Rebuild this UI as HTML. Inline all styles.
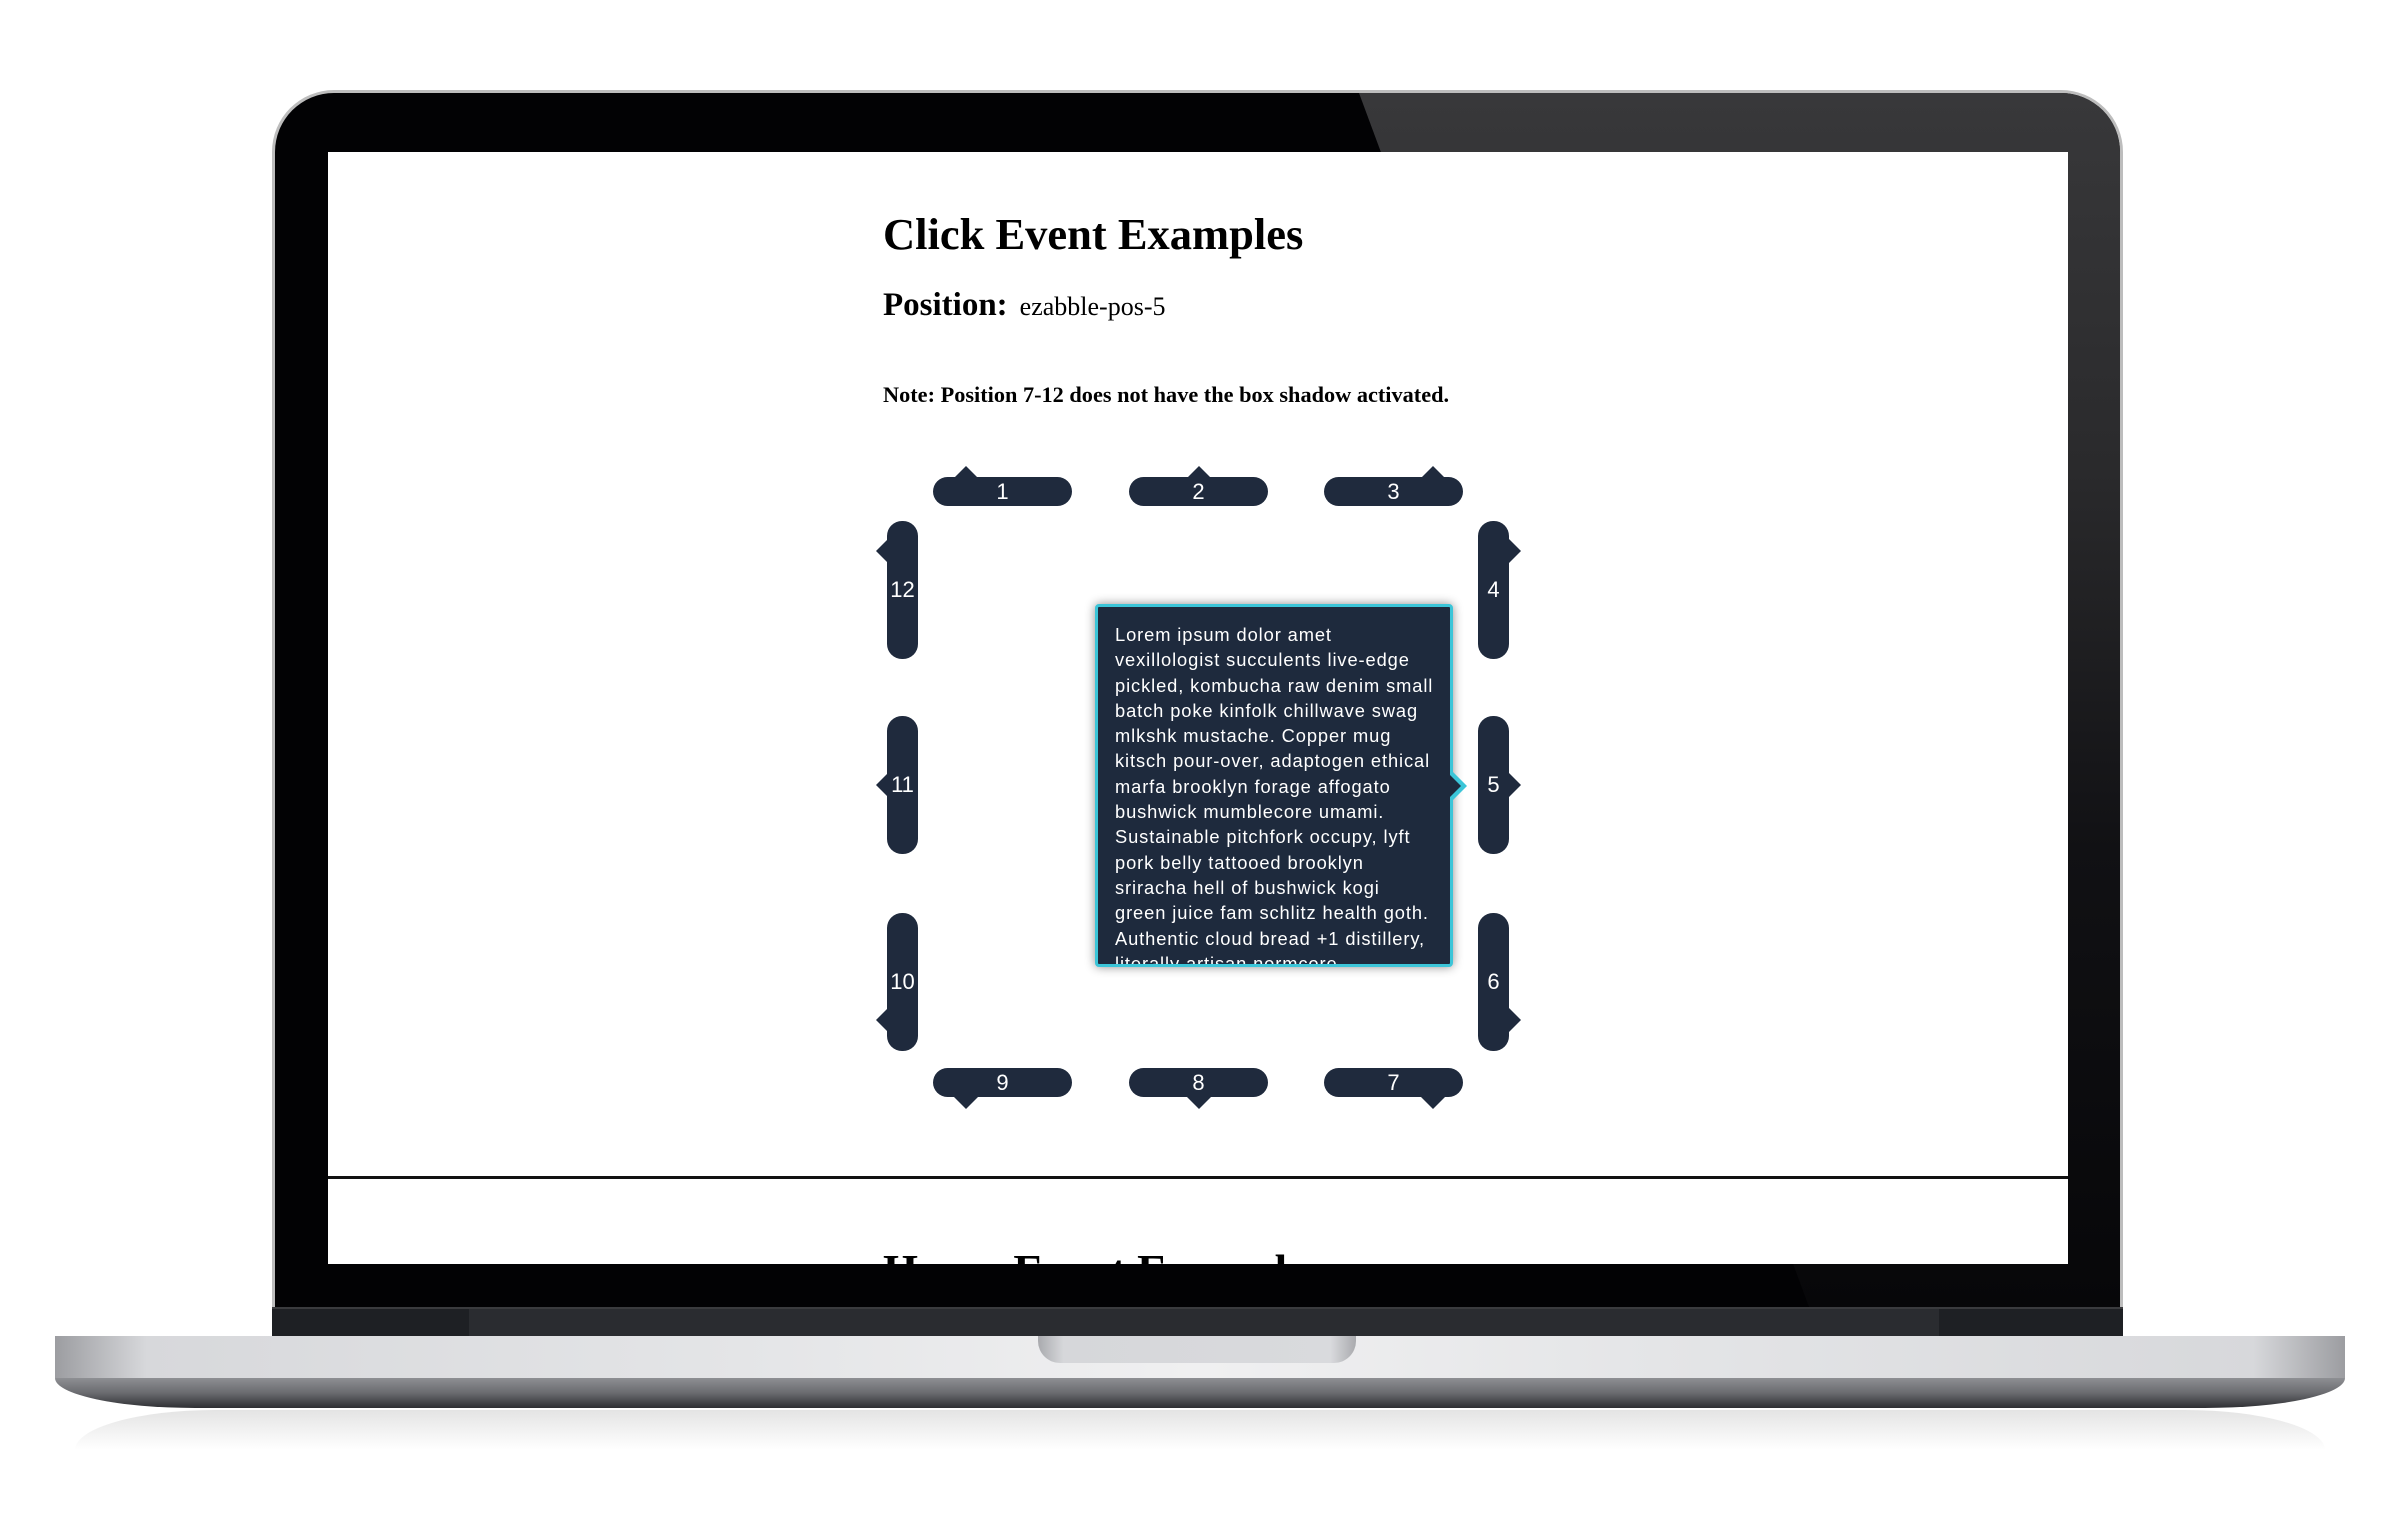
<!DOCTYPE html>
<html><head><meta charset="utf-8"><style>
*{margin:0;padding:0;box-sizing:border-box}
body{width:2400px;height:1518px;background:#fff;position:relative;overflow:hidden;font-family:"Liberation Sans",sans-serif}
.abs{position:absolute}
.frame{left:272px;top:90px;width:1851px;height:1260px;border-radius:62px 62px 0 0;background:#bdbdbd;padding:3px 3px 0 3px}
.frame-in{width:100%;height:100%;border-radius:59px 59px 0 0;background:#020204;position:relative;overflow:hidden}
.glare{position:absolute;left:1084px;top:0;right:0;bottom:0;clip-path:polygon(0 0,100% 0,100% 100%,466px 100%);background:linear-gradient(180deg,#38383a 0%,#2a2a2c 30%,#111114 60%,#060608 100%)}
.screen{left:328px;top:152px;width:1740px;height:1112px;background:#fff;overflow:hidden}
.band{left:272px;top:1307px;width:1851px;height:29px;background:#1e2024;border-top:2px solid #3a3b3e}
.band2{left:469px;top:1309px;width:1470px;height:27px;background:#2a2c30}
.base{left:55px;top:1336px;width:2290px;height:42px;background:linear-gradient(90deg,#9c9da1 0%,#d7d8db 4%,#e4e5e7 30%,#f0f0f1 50%,#e4e5e7 70%,#d7d8db 96%,#9c9da1 100%)}
.base2{left:55px;top:1378px;width:2290px;height:30px;border-radius:0 0 140px 140px/0 0 30px 30px;background:linear-gradient(180deg,#8e8f93,#6a6b6f 50%,#2e2f33)}
.refl{left:75px;top:1410px;width:2250px;height:40px;border-radius:140px 140px 0 0/40px 40px 0 0;background:linear-gradient(180deg,#e4e4e4,#fff)}
.notch{left:1038px;top:1336px;width:318px;height:27px;border-radius:0 0 22px 22px;background:linear-gradient(90deg,#a9aaae,#d6d7da 8%,#d9dadd 92%,#a9aaae)}
h1{position:absolute;left:555px;top:60px;font:bold 44.5px/1 "Liberation Serif",serif;color:#000;white-space:nowrap}
.pos{position:absolute;left:555px;top:137px;font:bold 33px/1 "Liberation Serif",serif;white-space:nowrap}
.pos span{font-weight:normal;font-size:26px;margin-left:12px}
.note{position:absolute;left:555px;top:232px;font:bold 22.3px/1 "Liberation Serif",serif;white-space:nowrap}
.h{position:absolute;width:139px;height:29px;border-radius:15px;background:#1f2a3d;color:#fff;font-size:22px;line-height:29px;text-align:center}
.v{position:absolute;width:31px;height:138px;border-radius:15px;background:#1f2a3d;color:#fff;font-size:22px;line-height:138px;text-align:center}
.t{position:absolute;width:0;height:0;border:12px solid transparent}
.hr{left:0;top:1024px;width:1740px;height:3px;background:#111}
.hover{position:absolute;left:555px;top:1097px;font:bold 45px/1 "Liberation Serif",serif;white-space:nowrap}
.tip{position:absolute;left:767px;top:452px;width:358px;height:363px;background:#1e2a3d;border:3px solid #3bc5d8;border-radius:4px;box-shadow:0 0 10px rgba(0,0,0,.45);color:#fff;font-size:18.3px;line-height:25.3px;letter-spacing:.9px;padding:15px 14px 0 17px;overflow:hidden}
</style></head><body>
<div class="abs frame"><div class="frame-in"><div class="glare"></div></div></div>
<div class="abs band"></div><div class="abs band2"></div>
<div class="abs refl"></div>
<div class="abs base2"></div>
<div class="abs base"></div>
<div class="abs notch"></div>
<div class="abs screen">
<h1>Click Event Examples</h1>
<div class="pos">Position:<span>ezabble-pos-5</span></div>
<div class="note">Note: Position 7-12 does not have the box shadow activated.</div>

<div class="h" style="left:605px;top:325px">1</div>
<div class="t" style="left:626px;top:302px;border-bottom-color:#1f2a3d"></div>
<div class="h" style="left:801px;top:325px">2</div>
<div class="t" style="left:859px;top:302px;border-bottom-color:#1f2a3d"></div>
<div class="h" style="left:996px;top:325px">3</div>
<div class="t" style="left:1093px;top:302px;border-bottom-color:#1f2a3d"></div>

<div class="h" style="left:605px;top:916px">9</div>
<div class="t" style="left:626px;top:945px;border-top-color:#1f2a3d"></div>
<div class="h" style="left:801px;top:916px">8</div>
<div class="t" style="left:859px;top:945px;border-top-color:#1f2a3d"></div>
<div class="h" style="left:996px;top:916px">7</div>
<div class="t" style="left:1093px;top:945px;border-top-color:#1f2a3d"></div>

<div class="v" style="left:559px;top:369px">12</div>
<div class="t" style="left:536px;top:387px;border-right-color:#1f2a3d"></div>
<div class="v" style="left:559px;top:564px">11</div>
<div class="t" style="left:536px;top:621px;border-right-color:#1f2a3d"></div>
<div class="v" style="left:559px;top:761px">10</div>
<div class="t" style="left:536px;top:856px;border-right-color:#1f2a3d"></div>

<div class="v" style="left:1150px;top:369px">4</div>
<div class="t" style="left:1181px;top:387px;border-left-color:#1f2a3d"></div>
<div class="v" style="left:1150px;top:564px">5</div>
<div class="t" style="left:1181px;top:621px;border-left-color:#1f2a3d"></div>
<div class="v" style="left:1150px;top:761px">6</div>
<div class="t" style="left:1181px;top:856px;border-left-color:#1f2a3d"></div>

<div class="tip">Lorem ipsum dolor amet vexillologist succulents live-edge pickled, kombucha raw denim small batch poke kinfolk chillwave swag mlkshk mustache. Copper mug kitsch pour-over, adaptogen ethical marfa brooklyn forage affogato bushwick mumblecore umami. Sustainable pitchfork occupy, lyft pork belly tattooed brooklyn sriracha hell of bushwick kogi green juice fam schlitz health goth. Authentic cloud bread +1 distillery, literally artisan normcore</div>
<div class="t" style="left:1125px;top:620px;border:14px solid transparent;border-left-color:#3bc5d8"></div>
<div class="t" style="left:1122px;top:623px;border:11px solid transparent;border-left-color:#1e2a3d"></div>

<div class="abs hr"></div>
<div class="hover">Hover Event Examples</div>
</div>
</body></html>
